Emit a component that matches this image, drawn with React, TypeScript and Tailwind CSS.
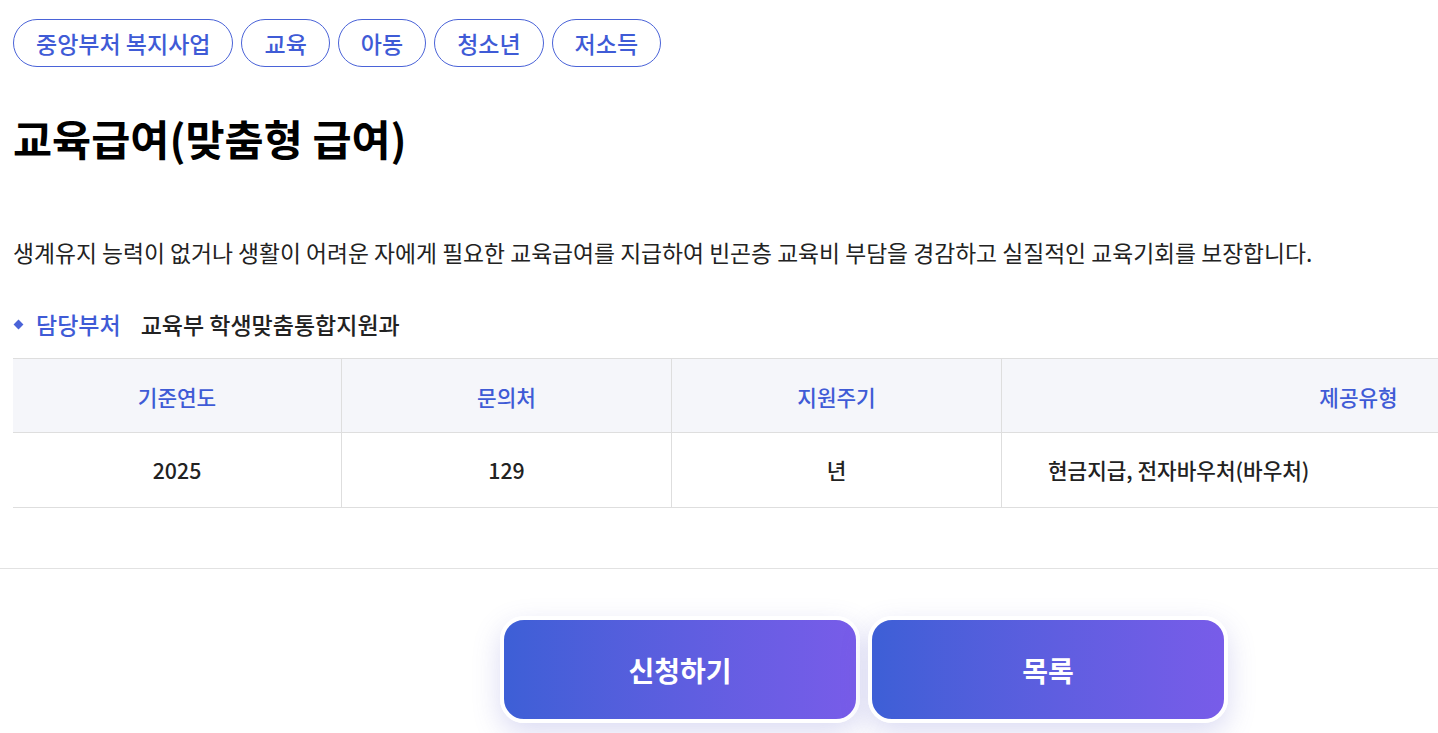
import React from "react";

const tags = ["중앙부처 복지사업", "교육", "아동", "청소년", "저소득"];

const cols = [
  { head: "기준연도", value: "2025" },
  { head: "문의처", value: "129" },
  { head: "지원주기", value: "년" },
];

const App = () => {
  return (
    <div className="w-full overflow-hidden bg-white font-['Noto_Sans_CJK_KR','Noto_Sans',sans-serif] text-[#222]">
      <div className="w-[1728px]">
        <div className="px-[13px] pt-[19px]">
          <div className="flex gap-[8px]">
            {tags.map((tag) => (
              <span
                key={tag}
                className="flex h-[48px] items-center rounded-full border border-[#4a63d8] px-[22px] text-[23px] font-medium text-[#3f5bd6]"
              >
                {tag}
              </span>
            ))}
          </div>

          <h1 className="mt-[45px] text-[42.5px] font-bold leading-[52px] text-black">
            교육급여(맞춤형 급여)
          </h1>

          <p className="mt-[74px] text-[22.8px] leading-[30px]">
            생계유지 능력이 없거나 생활이 어려운 자에게 필요한 교육급여를 지급하여 빈곤층 교육비 부담을 경감하고 실질적인 교육기회를 보장합니다.
          </p>

          <div className="mt-[41px] flex items-center text-[23px] leading-[30px]">
            <span className="ml-[2px] mr-[14px] h-[7px] w-[7px] rotate-45 bg-[#4a63d8]" />
            <span className="font-medium text-[#3f5bd6]">담당부처</span>
            <span className="ml-[20px] font-medium">교육부 학생맞춤통합지원과</span>
          </div>

          <div className="mt-[19px] grid grid-cols-[329px_330px_330px_1fr] border-y border-[#dedede] text-[21.3px]">
            {cols.map((c) => (
              <div
                key={c.head}
                className="flex h-[74px] items-center justify-center border-r border-b border-[#dedede] bg-[#f5f6fa] pt-[2px] font-medium text-[#3f5bd6]"
              >
                {c.head}
              </div>
            ))}
            <div className="flex h-[74px] items-center justify-center border-b border-[#dedede] bg-[#f5f6fa] pt-[2px] font-medium text-[#3f5bd6]">
              제공유형
            </div>
            {cols.map((c) => (
              <div
                key={c.value}
                className="flex h-[74px] items-center justify-center border-r border-[#dedede] font-medium"
              >
                {c.value}
              </div>
            ))}
            <div className="flex h-[74px] items-center pl-[46px] font-medium">
              현금지급, 전자바우처(바우처)
            </div>
          </div>
        </div>

        <div className="mt-[60px] h-px bg-[#e2e2e2]" />

        <div className="flex justify-center gap-[8px] pt-[47px] pb-[20px]">
          {["신청하기", "목록"].map((label) => (
            <button
              key={label}
              className="flex h-[107px] w-[360px] items-center justify-center rounded-[24px] border-[4px] border-white bg-gradient-to-r from-[#3d5fd6] to-[#785ce9] text-[28px] font-bold text-white shadow-[0_10px_28px_rgba(90,90,200,0.22)]"
            >
              {label}
            </button>
          ))}
        </div>
      </div>
    </div>
  );
};

export default App;
